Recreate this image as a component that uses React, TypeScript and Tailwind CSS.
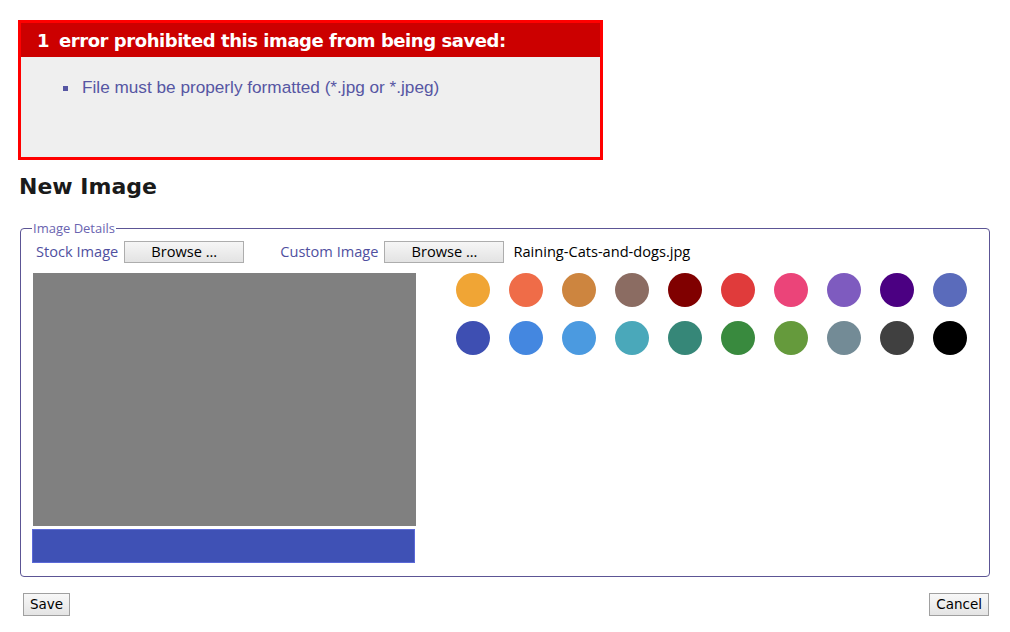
import React from "react";

const row1 = ["#f0a535", "#ef6c48", "#cd853f", "#8b6c62", "#800000", "#e03b3b", "#eb4479", "#7e5bbf", "#4b0082", "#5a6bbb"];
const row2 = ["#3e4fb2", "#4487e0", "#4b9ae0", "#4aa8ba", "#368778", "#398a3e", "#659a3c", "#738b96", "#404040", "#000000"];

function BrowseBtn() {
  return (
    <button className="h-[22px] w-[120px] border border-[#adadad] bg-gradient-to-b from-[#f6f6f6] to-[#e3e3e3] text-[14.6px] leading-none text-black [font-family:'Open_Sans',sans-serif]">
      Browse ...
    </button>
  );
}

export default function App() {
  return (
    <div className="min-h-[632px] w-[1010px] bg-white pl-[18px] pt-[20px]">
      <div className="w-[585px] border-[3px] border-[#ff0000] bg-[#efefef]">
        <div className="flex h-[34px] items-center bg-[#cc0000] pl-[16px] text-[18px] font-bold text-white [font-family:'DejaVu_Sans',Verdana,sans-serif] tracking-[-0.45px]">
          <span>1</span>
          <span className="ml-[10px]">error prohibited this image from being saved:</span>
        </div>
        <ul className="h-[100px] list-[square] pl-[59px] pt-[18px] text-[17.2px] text-[#5656a3] [font-family:'Liberation_Sans',Arial,sans-serif]">
          <li className="pl-[2px]">File must be properly formatted (*.jpg or *.jpeg)</li>
        </ul>
      </div>

      <h2 className="mt-[13px] pl-[1px] text-[22px] font-bold leading-[28px] text-[#1a1a1a] [font-family:'DejaVu_Sans',Verdana,sans-serif]">
        New Image
      </h2>

      <fieldset className="ml-[2px] mt-[19px] h-[357px] w-[970px] rounded-[4px] border border-[#5c5595] pl-[11px] pr-[12px]">
        <legend className="px-[1px] text-[13px] leading-[16px] text-[#6a64b0] [font-family:'Open_Sans',sans-serif]">
          Image Details
        </legend>
        <div className="mt-[5px] flex h-[22px] items-center pl-[4px] text-[14.6px] [font-family:'Open_Sans',sans-serif]">
          <span className="text-[#5050a0]">Stock Image</span>
          <span className="ml-[6px]"><BrowseBtn /></span>
          <span className="ml-[36px] text-[#5050a0]">Custom Image</span>
          <span className="ml-[6px]"><BrowseBtn /></span>
          <span className="ml-[9px] text-black">Raining-Cats-and-dogs.jpg</span>
        </div>
        <div className="mt-[10px] flex">
          <div className="flex w-[384px] flex-col">
            <div className="ml-[1px] h-[253px] w-[383px] bg-[#808080]" />
            <div className="mt-[3px] h-[34px] w-[383px] border border-[#5b69d8] bg-[#3f51b5]" />
          </div>
          <div className="ml-[40px] flex flex-col gap-[14px]">
            {[row1, row2].map((row, i) => (
              <div key={i} className="flex gap-[19px]">
                {row.map((c) => (
                  <div key={c} className="h-[34px] w-[34px] rounded-full" style={{ backgroundColor: c }} />
                ))}
              </div>
            ))}
          </div>
        </div>
      </fieldset>

      <div className="mt-[16px] flex w-[971px] justify-between pl-[5px] text-[13.5px] [font-family:'DejaVu_Sans',Tahoma,sans-serif]">
        <button className="h-[23px] border border-[#a0a0a0] bg-gradient-to-b from-[#f8f8f8] to-[#e4e4e4] px-[6px] text-black">Save</button>
        <button className="h-[23px] border border-[#a0a0a0] bg-gradient-to-b from-[#f8f8f8] to-[#e4e4e4] px-[6px] text-black">Cancel</button>
      </div>
    </div>
  );
}
